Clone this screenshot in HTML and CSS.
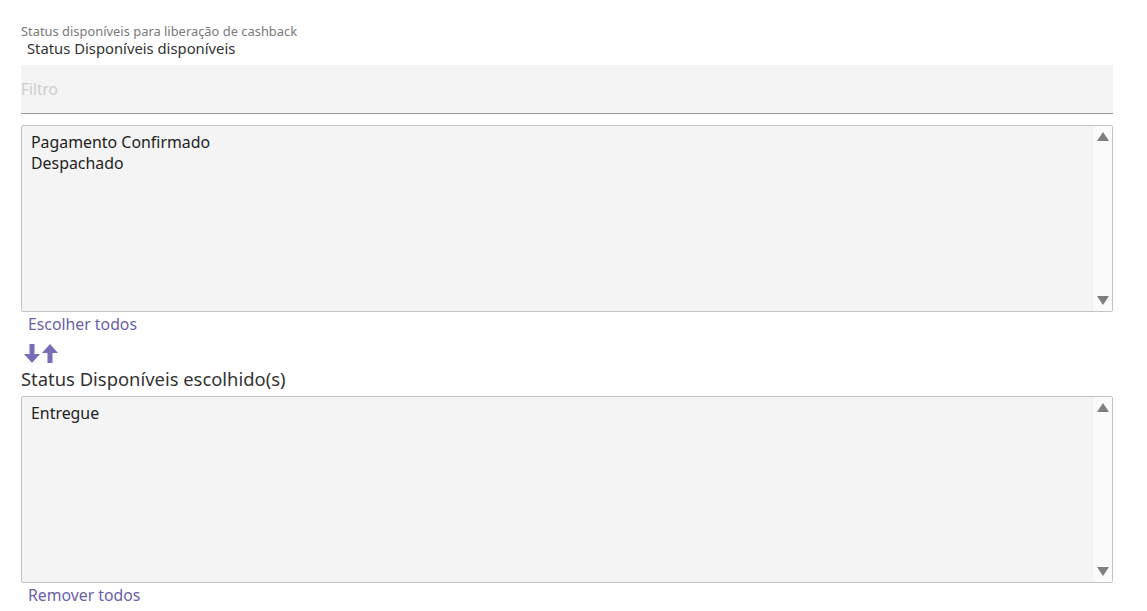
FILE: index.html
```html
<!DOCTYPE html>
<html lang="pt-BR">
<head>
<meta charset="utf-8">
<title>Status cashback</title>
<link rel="stylesheet" href="styles.css">
</head>
<body>
<div class="page">
  <div class="hint">Status disponíveis para liberação de cashback</div>
  <div class="subtitle">Status Disponíveis disponíveis</div>
  <div class="filter"><span class="placeholder">Filtro</span></div>
  <div class="listbox">
    <div class="options">
      <div class="opt">Pagamento Confirmado</div>
      <div class="opt">Despachado</div>
    </div>
    <div class="scrollbar">
      <span class="tri up"></span>
      <span class="tri down"></span>
    </div>
  </div>
  <a class="link link-choose">Escolher todos</a>
  <div class="arrows">
    <svg width="16" height="19" viewBox="0 0 16 19"><path d="M5.5 0h5v10h5.5L8 19 0 10h5.5z" fill="#7b6cb8"/></svg>
    <svg width="16" height="19" viewBox="0 0 16 19"><path d="M5.5 19h5V9h5.5L8 0 0 9h5.5z" fill="#7b6cb8"/></svg>
  </div>
  <div class="heading">Status Disponíveis escolhido(s)</div>
  <div class="listbox">
    <div class="options">
      <div class="opt">Entregue</div>
    </div>
    <div class="scrollbar">
      <span class="tri up"></span>
      <span class="tri down"></span>
    </div>
  </div>
  <a class="link link-remove">Remover todos</a>
</div>
</body>
</html>
```
FILE: styles.css
```css
html, body {
  margin: 0;
  padding: 0;
  background: #ffffff;
}
body {
  font-family: "Noto Sans", "Lato", sans-serif;
}
.page {
  width: 1092px;
  padding: 23px 0 0 21px;
  display: flex;
  flex-direction: column;
  align-items: flex-start;
}
.hint {
  font-size: 12.9px;
  line-height: 16px;
  color: #7a7a7a;
}
.subtitle {
  font-size: 14.8px;
  line-height: 18px;
  color: #333333;
  margin-left: 6px;
}
.filter {
  box-sizing: border-box;
  margin-top: 8px;
  width: 1092px;
  height: 49px;
  background: #f4f4f4;
  border-bottom: 1px solid #999999;
  display: flex;
  align-items: center;
}
.placeholder {
  font-size: 15.4px;
  color: #cccccc;
  margin-top: 1px;
}
.listbox {
  box-sizing: border-box;
  margin-top: 11px;
  width: 1092px;
  height: 187px;
  border: 1px solid #c4c4c4;
  border-radius: 2px;
  background: #f4f4f4;
  display: flex;
}
.options {
  flex: 1;
  padding: 6px 0 0 9px;
}
.opt {
  font-size: 15.9px;
  line-height: 21px;
  color: #222222;
}
.scrollbar {
  width: 19px;
  background: #fafafa;
  border-left: 1px solid #f0f0f0;
  display: flex;
  flex-direction: column;
  justify-content: space-between;
  align-items: center;
  padding: 6px 0 6px;
}
.tri {
  width: 0;
  height: 0;
  border-left: 6px solid transparent;
  border-right: 6px solid transparent;
}
.tri.up {
  border-bottom: 9px solid #7f7f7f;
}
.tri.down {
  border-top: 9px solid #7f7f7f;
}
.link {
  font-size: 15.8px;
  line-height: 20px;
  color: #6a5fa9;
  margin-left: 7px;
  margin-top: 2px;
  cursor: pointer;
}
.arrows {
  display: flex;
  gap: 2px;
  margin-top: 10px;
  margin-left: 3px;
  height: 19px;
}
.heading {
  font-size: 18.4px;
  line-height: 22px;
  color: #333333;
  margin-top: 5px;
}
.heading + .listbox {
  margin-top: 6px;
}
```
